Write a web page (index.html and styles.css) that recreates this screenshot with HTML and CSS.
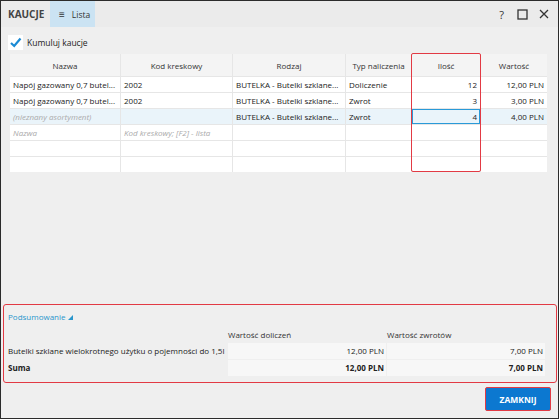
FILE: index.html
```
<!DOCTYPE html>
<html lang="pl">
<head>
    <meta charset="UTF-8">
    <title>Kaucje</title>
    <link rel="stylesheet" href="styles.css">
</head>
<body>
    <div class="window">
        <div class="titlebar">
            <span class="title">KAUCJE</span>
            <span class="tab"><span class="burger">&equiv;</span>Lista</span>
            <div class="win-btns">
                <span class="help">?</span>
                <svg width="11" height="11" viewBox="0 0 11 11"><rect x="1" y="1" width="9" height="9" fill="none" stroke="#333" stroke-width="1.3"/></svg>
                <svg width="10" height="10" viewBox="0 0 10 10"><path d="M1 1 L9 9 M9 1 L1 9" stroke="#333" stroke-width="1.3"/></svg>
            </div>
        </div>

        <div class="main">
            <label class="check">
                <span class="box">
                    <svg width="13" height="13" viewBox="0 0 13 13"><path d="M2 7 L5.2 10 L11.5 2.5" fill="none" stroke="#1a8ad4" stroke-width="2.2"/></svg>
                </span>
                Kumuluj kaucje
            </label>

            <div class="grid-wrap">
                <div class="grid">
                    <div class="hd">Nazwa</div>
                    <div class="hd">Kod kreskowy</div>
                    <div class="hd">Rodzaj</div>
                    <div class="hd">Typ naliczenia</div>
                    <div class="hd">Ilość</div>
                    <div class="hd">Wartość</div>

                    <div class="c">Napój gazowany 0,7 butel...</div>
                    <div class="c">2002</div>
                    <div class="c">BUTELKA - Butelki szklane...</div>
                    <div class="c">Doliczenie</div>
                    <div class="c num">12</div>
                    <div class="c num">12,00 PLN</div>

                    <div class="c">Napój gazowany 0,7 butel...</div>
                    <div class="c">2002</div>
                    <div class="c">BUTELKA - Butelki szklane...</div>
                    <div class="c">Zwrot</div>
                    <div class="c num">3</div>
                    <div class="c num">3,00 PLN</div>

                    <div class="c sel hint">(nieznany asortyment)</div>
                    <div class="c sel"></div>
                    <div class="c sel">BUTELKA - Butelki szklane...</div>
                    <div class="c sel">Zwrot</div>
                    <div class="c sel num focus">4</div>
                    <div class="c sel num">4,00 PLN</div>

                    <div class="c hint">Nazwa</div>
                    <div class="c hint">Kod kreskowy; [F2] - lista</div>
                    <div class="c"></div>
                    <div class="c"></div>
                    <div class="c"></div>
                    <div class="c"></div>

                    <div class="c"></div>
                    <div class="c"></div>
                    <div class="c"></div>
                    <div class="c"></div>
                    <div class="c"></div>
                    <div class="c"></div>

                    <div class="c"></div>
                    <div class="c"></div>
                    <div class="c"></div>
                    <div class="c"></div>
                    <div class="c"></div>
                    <div class="c"></div>
                </div>
                <div class="mark-col"></div>
            </div>
        </div>

        <div class="summary">
            <div class="sum-title">Podsumowanie <svg width="5" height="5" viewBox="0 0 5 5"><polygon points="5,0 5,5 0,5" fill="#2a96cc"/></svg></div>
            <div class="sum-grid">
                <div></div>
                <div class="sh">Wartość doliczeń</div>
                <div class="sh">Wartość zwrotów</div>

                <div class="sl">Butelki szklane wielokrotnego użytku o pojemności do 1,5l</div>
                <div class="sv">12,00 PLN</div>
                <div class="sv">7,00 PLN</div>

                <div class="sl bold">Suma</div>
                <div class="sv bold">12,00 PLN</div>
                <div class="sv bold">7,00 PLN</div>
            </div>
        </div>

        <div class="footer">
            <button class="close">ZAMKNIJ</button>
        </div>
    </div>
</body>
</html>
```

FILE: styles.css
```
* {
    box-sizing: border-box;
}
body {
    margin: 0;
    font-family: "Open Sans", "Noto Sans", sans-serif;
    font-size: 8px;
    color: #222;
}
.window {
    width: 559px;
    height: 419px;
    border: 1px solid #2b2b2b;
    background: #efefef;
    display: flex;
    flex-direction: column;
}

/* title bar */
.titlebar {
    height: 26px;
    display: flex;
    align-items: stretch;
    background: #ebebeb;
}
.title {
    font-size: 10px;
    font-weight: bold;
    color: #444;
    padding-left: 7px;
    width: 49px;
    display: flex;
    align-items: center;
}
.tab {
    width: 45px;
    background: #cbe3f3;
    display: flex;
    align-items: center;
    padding-left: 9px;
    color: #333;
    font-size: 8.5px;
}
.burger {
    font-size: 10px;
    margin-right: 7px;
}
.win-btns {
    margin-left: auto;
    display: flex;
    align-items: center;
    gap: 11px;
    padding-right: 9px;
}
.help {
    font-size: 11px;
    color: #333;
    margin-right: 2px;
}

/* content */
.main {
    padding: 8px 0 0 7px;
}
.check {
    display: flex;
    align-items: center;
    gap: 4px;
    height: 15px;
    font-size: 8.5px;
}
.box {
    width: 15px;
    height: 15px;
    background: #fff;
    display: flex;
    align-items: center;
    justify-content: center;
}
.grid-wrap {
    position: relative;
    margin: 4px 0 0 2px;
    width: 537px;
}
.grid {
    display: grid;
    grid-template-columns: 110px 111px 112px 65px 68px 66px;
    grid-template-rows: 22px repeat(6, 15px);
    gap: 1px;
    background: #e6e6e6;
}
.hd {
    background: #f4f4f4;
    display: flex;
    align-items: center;
    justify-content: center;
    color: #333;
}
.c {
    background: #fff;
    padding: 0 3px;
    line-height: 15px;
    white-space: nowrap;
    overflow: hidden;
}
.c.num {
    text-align: right;
}
.c.sel {
    background: #eaf4fa;
}
.c.hint {
    color: #aaa;
    font-style: italic;
}
.c.focus {
    border: 1px solid #2a9ad8;
    line-height: 13px;
    padding-right: 2px;
}
.mark-col {
    position: absolute;
    left: 401px;
    top: -1px;
    width: 70px;
    height: 119px;
    border: 1px solid #e23a44;
    border-radius: 2px;
}

/* summary */
.summary {
    margin: auto 1px 0 2px;
    border: 1px solid #e23a44;
    border-radius: 3px;
    padding: 5px 10px 6px 4px;
}
.sum-title {
    color: #2a96cc;
    line-height: 14px;
    margin-bottom: 4px;
}
.sum-grid {
    display: grid;
    grid-template-columns: 219px 158px 158px;
    grid-template-rows: 14px 16px 16px;
    gap: 1px;
}
.sh {
    color: #333;
    line-height: 14px;
}
.sl {
    line-height: 16px;
    white-space: nowrap;
}
.sv {
    background: #f7f7f7;
    text-align: right;
    line-height: 16px;
    padding-right: 2px;
}
.bold {
    font-weight: bold;
}

/* footer */
.footer {
    display: flex;
    justify-content: flex-end;
    padding: 4px 7px 7px 0;
}
.close {
    width: 66px;
    height: 24px;
    background: #0c78d0;
    border: 1px solid #e23a44;
    border-radius: 2px;
    color: #fff;
    font-family: inherit;
    font-size: 8.5px;
    font-weight: bold;
    padding: 0;
}
```
